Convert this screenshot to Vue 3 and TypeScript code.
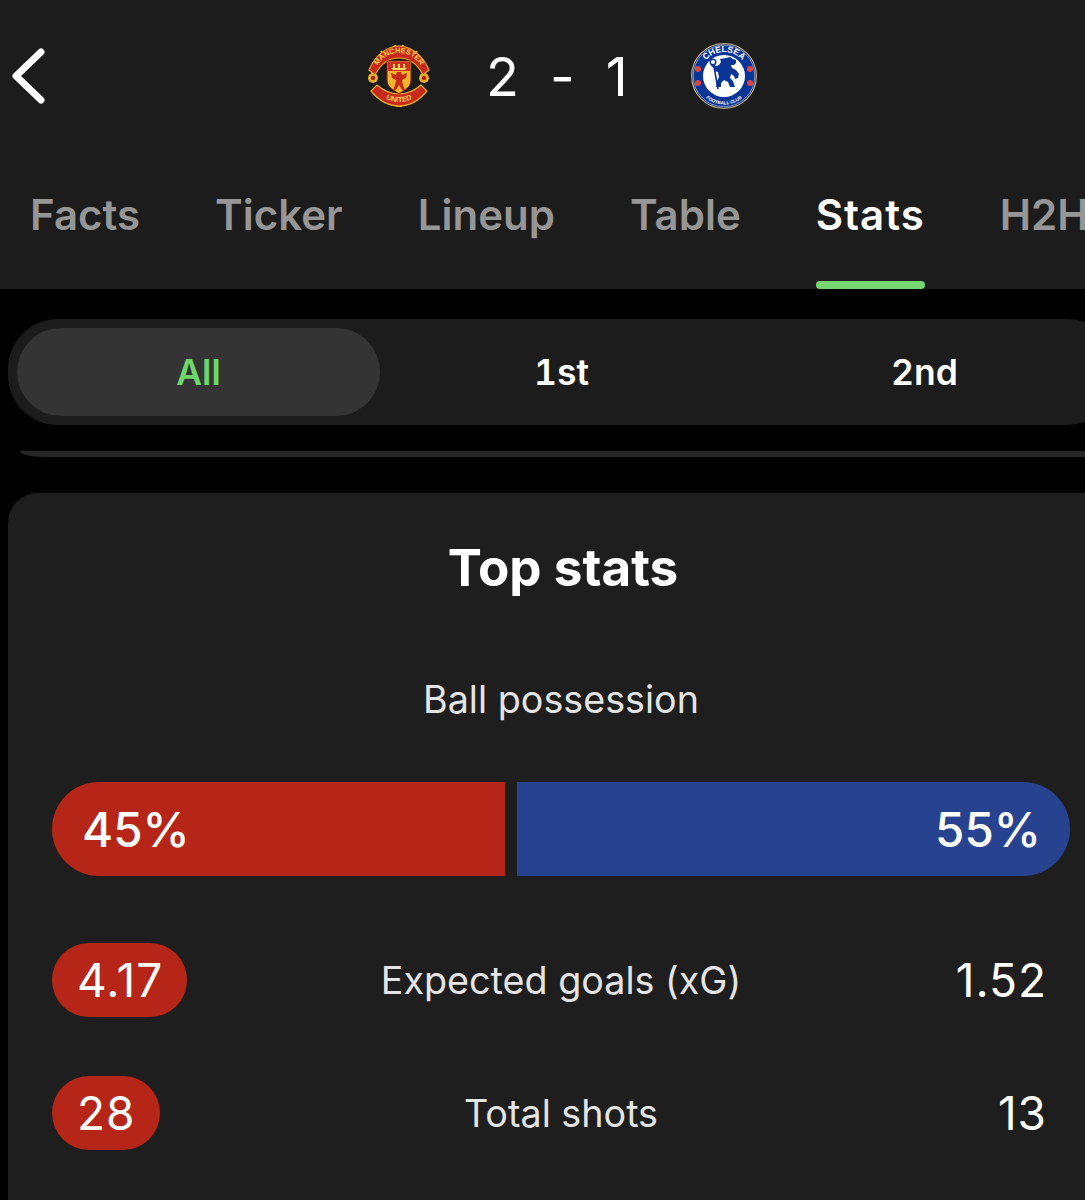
<script setup lang="ts">
const tabs: string[] = ['Facts', 'Ticker', 'Lineup', 'Table', 'Stats', 'H2H']
const periods: string[] = ['All', '1st', '2nd']
const rows = [
  { home: '4.17', label: 'Expected goals (xG)', away: '1.52' },
  { home: '28', label: 'Total shots', away: '13' },
]
</script>

<template>
  <div class="page">
    <header class="top">
      <div class="match">
        <svg class="back" viewBox="0 0 36 60" width="36" height="60" aria-label="Back">
          <path d="M30 6 L5 30 L30 54" fill="none" stroke="#fff" stroke-width="7" stroke-linecap="round" stroke-linejoin="round" />
        </svg>
        <svg class="crest mu" viewBox="0 0 64 64" width="64" height="64">
          <defs>
            <path id="muTop" d="M8 27 C14 12 24 9 32 9 C40 9 50 12 56 27" />
            <path id="muBottom" d="M9 47 C16 55 24 58 32 58 C40 58 48 55 55 47" />
          </defs>
          <circle cx="6" cy="34" r="5" fill="#e6ad2b" />
          <circle cx="57" cy="34" r="5" fill="#e6ad2b" />
          <circle cx="6" cy="34" r="2.2" fill="#a8261a" />
          <circle cx="57" cy="34" r="2.2" fill="#a8261a" />
          <path d="M28 1 l1 3 M36 1 l-1 3 M14 7 l2 3 M50 7 l-2 3" stroke="#e6ad2b" stroke-width="2" />
          <rect x="29" y="60" width="6" height="3" fill="#e6ad2b" />
          <path d="M2 26 C9 9 22 2 32 2 C42 2 55 9 62 26 L56 31 C50 19 41 14 32 14 C23 14 14 19 8 31 Z" fill="#c72a1c" stroke="#e6ad2b" stroke-width="1.2" />
          <path d="M10 41 C17 47 24 50 32 50 C40 50 47 47 54 41 L60 47 C51 58 41 62 32 62 C23 62 13 58 4 47 Z" fill="#c72a1c" stroke="#e6ad2b" stroke-width="1.2" />
          <text class="crest-text" font-size="7.4" fill="#f6cf56"><textPath href="#muTop" startOffset="50%" text-anchor="middle">MANCHESTER</textPath></text>
          <text class="crest-text" font-size="7.4" fill="#f6cf56"><textPath href="#muBottom" startOffset="50%" text-anchor="middle">UNITED</textPath></text>
          <path d="M20 17 H44 V36 C44 44 37 46 32 50 C27 46 20 44 20 36 Z" fill="#f0b429" stroke="#7c1a12" stroke-width="1" />
          <path d="M21 18 H43 V27 H21 Z" fill="#d12e1f" />
          <path d="M24 24 h16 l-2 2 h-12 Z M26 20 h2 v4 h-2 Z M31 20 h2 v4 h-2 Z M36 20 h2 v4 h-2 Z" fill="#f6d768" />
          <path d="M30 28 h4 l1 3 l5 -2 l-1 5 l-4 2 l1 5 l2 5 h-3 l-3 -5 l-3 5 h-3 l2 -5 l1 -5 l-4 -2 l-1 -5 l5 2 Z" fill="#c72a1c" />
        </svg>
        <div class="score"><span>2</span><span class="dash">-</span><span>1</span></div>
        <svg class="crest che" viewBox="0 0 66 66" width="66" height="66">
          <defs>
            <path id="cheTop" d="M9 33 A24 24 0 0 1 57 33" />
            <path id="cheBottom" d="M4.5 33 A28.5 28.5 0 0 0 61.5 33" />
          </defs>
          <circle cx="33" cy="33" r="32.4" fill="#0a2f86" stroke="#b9a878" stroke-width="1.2" />
          <circle cx="33" cy="33" r="30.8" fill="#0b3596" stroke="#dcdcdc" stroke-width=".6" />
          <circle cx="33" cy="33" r="21" fill="#fff" />
          <text class="crest-text" font-size="8.6" fill="#fff"><textPath href="#cheTop" startOffset="50%" text-anchor="middle">CHELSEA</textPath></text>
          <text class="crest-text" font-size="4.6" fill="#fff"><textPath href="#cheBottom" startOffset="50%" text-anchor="middle">FOOTBALL CLUB</textPath></text>
          <circle cx="7" cy="26" r="3" fill="#e0433f" />
          <circle cx="7" cy="40" r="3" fill="#e0433f" />
          <circle cx="59" cy="26" r="3" fill="#e0433f" />
          <circle cx="59" cy="40" r="3" fill="#e0433f" />
          <path d="M35 15 l4 -1 l3 2 l3 1 l0 3 l-2 2 l-3 0 l1 3 l4 2 l3 4 l-1 4 l-3 1 l-1 -3 l-3 -2 l-1 4 l3 3 l2 6 h-5 l-2 -5 l-4 -2 l-3 3 l0 4 h-5 l1 -6 l2 -4 l-1 -5 l-4 -1 l0 -3 l-3 -2 l1 -2 l4 2 l3 -1 l2 -3 l-1 -3 Z" fill="#0b3596" />
          <path d="M22.5 21 L27 46" stroke="#0b3596" stroke-width="1.6" />
          <circle cx="22" cy="19" r="2.8" fill="#fff" stroke="#0b3596" stroke-width="1.4" />
        </svg>
      </div>
      <nav class="tabs">
        <div v-for="t in tabs" :key="t" class="tab" :class="{ on: t === 'Stats' }">{{ t }}</div>
      </nav>
    </header>

    <div class="segment">
      <div v-for="p in periods" :key="p" class="seg" :class="{ on: p === 'All' }">{{ p }}</div>
    </div>

    <div class="sliver"></div>

    <section class="card">
      <h2 class="title">Top stats</h2>
      <div class="poss-label">Ball possession</div>
      <div class="bar">
        <div class="bar-home">45%</div>
        <div class="bar-away">55%</div>
      </div>
      <div v-for="r in rows" :key="r.label" class="row">
        <div class="side"><span class="pill">{{ r.home }}</span></div>
        <div class="label">{{ r.label }}</div>
        <div class="side right">{{ r.away }}</div>
      </div>
    </section>
  </div>
</template>

<style>
html, body { margin: 0; background: #000; }
</style>

<style scoped>
.page {
  width: 1085px;
  height: 1200px;
  overflow: hidden;
  background: #000;
  color: #fff;
  font-family: Inter, "Liberation Sans", sans-serif;
}
.top { background: #1c1c1c; height: 289px; }
.match {
  height: 155px;
  display: flex;
  align-items: center;
  padding-left: 11px;
}
.back { flex: none; margin-top: -3px; }
.crest { flex: none; margin-top: -3px; }
.mu { margin-left: 320px; }
.che { margin-left: 63px; }
.crest-text { font-family: "Liberation Sans", sans-serif; font-weight: 700; }
.score {
  margin-left: 55px;
  display: flex;
  gap: 31px;
  font-size: 54px;
  font-weight: 400;
  margin-top: -3px;
}
.tabs {
  display: flex;
  gap: 75px;
  padding-left: 30px;
  height: 134px;
  white-space: nowrap;
  overflow: hidden;
}
.tab {
  position: relative;
  flex: none;
  font-size: 42px;
  font-weight: 600;
  line-height: 46px;
  padding-top: 37px;
  color: #969696;
}
.tab.on { color: #fff; letter-spacing: 1px; }
.tab.on::after {
  content: "";
  position: absolute;
  left: 0;
  right: 0;
  bottom: 0;
  height: 8px;
  border-radius: 4px;
  background: #78d672;
}
.segment {
  margin: 30px 0 0 8px;
  width: 1110px;
  height: 106px;
  box-sizing: border-box;
  padding: 9px;
  display: grid;
  grid-template-columns: repeat(3, 363px);
  border-radius: 50px;
  background: #1c1c1c;
}
.seg {
  height: 88px;
  display: flex;
  align-items: center;
  justify-content: center;
  font-size: 35.5px;
  font-weight: 600;
  font-feature-settings: "tnum";
  border-radius: 44px;
}
.seg.on { background: #343434; color: #6fd66b; }
.sliver {
  margin: 26px 0 0 20px;
  height: 6px;
  background: #262626;
  border-radius: 0 0 0 24px / 0 0 0 6px;
}
.card {
  margin: 36px 0 0 8px;
  width: 1110px;
  height: 720px;
  box-sizing: border-box;
  padding: 44px 0 0 44px;
  background: #1e1e1e;
  border-radius: 30px 0 0 0;
}
.title {
  margin: 0 0 0 2px;
  width: 1018px;
  text-align: center;
  font-size: 51.2px;
  line-height: 60px;
  font-weight: 700;
}
.poss-label {
  width: 1018px;
  margin-top: 80px;
  text-align: center;
  font-size: 37.7px;
  line-height: 44px;
  color: #e4e4e4;
}
.bar {
  width: 1018px;
  height: 94px;
  margin-top: 61px;
  display: flex;
  gap: 12px;
  font-size: 47.5px;
  font-weight: 500;
}
.bar-home, .bar-away {
  display: flex;
  align-items: center;
  box-sizing: border-box;
}
.bar-home {
  width: 453px;
  padding-left: 30px;
  background: #b52619;
  border-radius: 47px 0 0 47px;
}
.bar-away {
  flex: 1;
  justify-content: flex-end;
  padding-right: 29px;
  background: #27438f;
  border-radius: 0 47px 47px 0;
}
.row {
  width: 1018px;
  height: 74px;
  box-sizing: border-box;
  padding-right: 23px;
  display: grid;
  grid-template-columns: 200px 1fr 177px;
  align-items: center;
  margin-top: 59px;
  font-size: 46px;
  font-weight: 400;
  letter-spacing: 1px;
}
.bar + .row { margin-top: 67px; }
.pill {
  display: inline-block;
  height: 74px;
  line-height: 74px;
  padding: 0 24px 0 25px;
  border-radius: 37px;
  background: #b52619;
}
.label {
  text-align: center;
  font-size: 37.7px;
  letter-spacing: 0;
  color: #e4e4e4;
}
.side.right { text-align: right; }
</style>
